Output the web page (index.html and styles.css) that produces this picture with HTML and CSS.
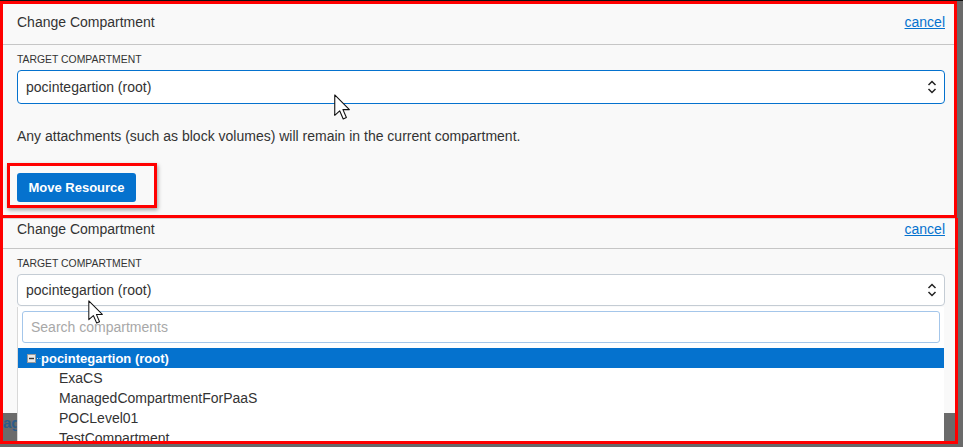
FILE: index.html
```html
<!DOCTYPE html>
<html lang="en">
<head>
    <meta charset="UTF-8">
    <title>Change Compartment</title>
    <link rel="stylesheet" href="styles.css">
</head>
<body>
    <div class="page">
        <!-- panel with the select closed -->
        <section class="shot shot-top">
            <div class="panel">
                <div class="panel-head">
                    <span class="panel-title">Change Compartment</span>
                    <a class="cancel" href="#">cancel</a>
                </div>
                <div class="panel-body">
                    <label class="field-label">Target Compartment</label>
                    <div class="select is-focused">
                        <span>pocintegartion (root)</span>
                        <svg class="chevrons" width="10" height="16" viewBox="0 0 10 16"><path d="M1.5 6 L5 2.5 L8.5 6 M1.5 10 L5 13.5 L8.5 10" fill="none" stroke="#222" stroke-width="1.5"/></svg>
                    </div>
                    <p class="note">Any attachments (such as block volumes) will remain in the current compartment.</p>
                    <div class="callout">
                        <button class="btn-primary" type="button">Move Resource</button>
                    </div>
                </div>
            </div>
            <svg class="cursor cursor-a" width="18" height="26" viewBox="0 0 12 19"><path d="M0.7 0.7 V15.6 L4.3 12.3 L6.9 18.2 L9.2 17.2 L6.7 11.4 L11.4 11.4 Z" fill="#fff" stroke="#111" stroke-width="0.8" stroke-linejoin="round"/></svg>
        </section>

        <!-- same panel with the compartment tree open -->
        <section class="shot shot-bottom">
            <div class="panel panel-short">
                <div class="panel-head">
                    <span class="panel-title">Change Compartment</span>
                    <a class="cancel" href="#">cancel</a>
                </div>
                <div class="panel-body">
                    <label class="field-label">Target Compartment</label>
                    <div class="select">
                        <span>pocintegartion (root)</span>
                        <svg class="chevrons" width="10" height="16" viewBox="0 0 10 16"><path d="M1.5 6 L5 2.5 L8.5 6 M1.5 10 L5 13.5 L8.5 10" fill="none" stroke="#222" stroke-width="1.5"/></svg>
                    </div>
                </div>
            </div>
            <span class="backdrop-text">ag</span>
            <div class="dropdown">
                <div class="search-wrap">
                    <input class="search" type="text" placeholder="Search compartments">
                </div>
                <ul class="tree">
                    <li class="tree-item is-selected">
                        <svg class="toggle" width="14" height="9" viewBox="0 0 14 9"><rect x="0.5" y="0.5" width="8" height="8" fill="#e8e8e8" stroke="#9a9a9a"/><path d="M2 4.5 H7" stroke="#333" stroke-width="1.4"/><path d="M10 4.5 H11 M12.5 4.5 H13.5" stroke="#cfd8e3" stroke-width="1"/></svg>
                        <span>pocintegartion (root)</span>
                    </li>
                    <li class="tree-item child">ExaCS</li>
                    <li class="tree-item child">ManagedCompartmentForPaaS</li>
                    <li class="tree-item child">POCLevel01</li>
                    <li class="tree-item child">TestCompartment</li>
                </ul>
            </div>
            <svg class="cursor cursor-b" width="17" height="24" viewBox="0 0 12 19"><path d="M0.7 0.7 V15.6 L4.3 12.3 L6.9 18.2 L9.2 17.2 L6.7 11.4 L11.4 11.4 Z" fill="#fff" stroke="#111" stroke-width="0.8" stroke-linejoin="round"/></svg>
        </section>
    </div>
</body>
</html>
```

FILE: styles.css
```css
body {
    margin: 0;
    background-color: #6a6a6a;
    font-family: 'Liberation Sans', Arial, sans-serif;
    color: #333;
}
.page {
    border-top: 1px solid #111;
    height: 446px;
    overflow: hidden;
}
.shot {
    position: relative;
    border: 3px solid #f00;
    box-sizing: border-box;
}
.shot-top {
    width: 957px;
    height: 217px;
    background-color: #f9f9f9;
}
.shot-bottom {
    width: 958px;
    height: 226px;
    border-top: none;
    background-color: #6b6b6b;
    overflow: hidden;
}
.panel {
    background-color: #f9f9f9;
}
.panel-head {
    display: flex;
    justify-content: space-between;
    align-items: center;
    height: 36px;
    padding: 0 9px 4px 14px;
    border-bottom: 1px solid #c6c6c6;
    font-size: 14px;
}
.panel-title {
    color: #333;
}
.cancel {
    color: #0572ce;
    text-decoration: underline;
}
.panel-body {
    padding: 9px 9px 0 14px;
}
.field-label {
    display: block;
    font-size: 10.4px;
    line-height: 12px;
    text-transform: uppercase;
    color: #333;
    margin-bottom: 4px;
}
.select {
    display: flex;
    justify-content: space-between;
    align-items: center;
    height: 34px;
    padding: 0 7px 0 8px;
    box-sizing: border-box;
    background-color: #fff;
    border: 1px solid #c4ccd4;
    border-radius: 4px;
    font-size: 14px;
    color: #333;
}
.select.is-focused {
    border-color: #0572ce;
}
.note {
    margin: 24px 0 0;
    font-size: 14px;
    line-height: 16px;
    color: #333;
}
.callout {
    display: inline-block;
    margin: 19px 0 0 -10px;
    padding: 7px 18px 3px 7px;
    border: 3px solid #f00;
    box-shadow: 1px 2px 4px rgba(0, 0, 0, 0.35);
}
.btn-primary {
    display: block;
    width: 119px;
    height: 29px;
    padding: 0;
    border: none;
    border-radius: 3px;
    background-color: #0572ce;
    color: #fff;
    font-family: inherit;
    font-size: 13px;
    font-weight: bold;
}

/* second capture: shorter header, select opened */
.panel-short {
    height: 195px;
    box-shadow: inset 0 1px 0 #d6d6d6;
}
.panel-short .panel-head {
    height: 22px;
    padding: 0 10px 8px 14px;
}
.panel-short .panel-body {
    padding: 9px 10px 0 14px;
}
.panel-short .select {
    height: 32px;
}
.backdrop-text {
    position: absolute;
    left: 0;
    top: 196px;
    font-size: 15px;
    font-weight: bold;
    color: #2c5d8a;
}
.dropdown {
    position: absolute;
    left: 14px;
    top: 89px;
    width: 927px;
    height: 140px;
    background-color: #fff;
    border-left: 1px solid #d8d8d8;
    box-sizing: border-box;
}
.search-wrap {
    padding: 4px 4px 0 4px;
}
.search {
    display: block;
    width: 100%;
    height: 32px;
    box-sizing: border-box;
    padding: 0 8px;
    border: 1px solid #a4c6ea;
    border-radius: 3px;
    font-family: inherit;
    font-size: 14px;
    color: #333;
    outline: none;
}
.search::placeholder {
    color: #a8a8a8;
}
.tree {
    list-style: none;
    margin: 5px 0 0;
    padding: 0;
}
.tree-item {
    display: flex;
    align-items: center;
    height: 20px;
    font-size: 14px;
    color: #333;
}
.tree-item.is-selected {
    background-color: #0572ce;
    color: #fff;
    font-weight: bold;
    font-size: 13px;
    padding-left: 9px;
}
.tree-item.child {
    padding-left: 41px;
}
.cursor {
    position: absolute;
}
.cursor-a {
    left: 330px;
    top: 90px;
}
.cursor-b {
    left: 84px;
    top: 82px;
}
```
